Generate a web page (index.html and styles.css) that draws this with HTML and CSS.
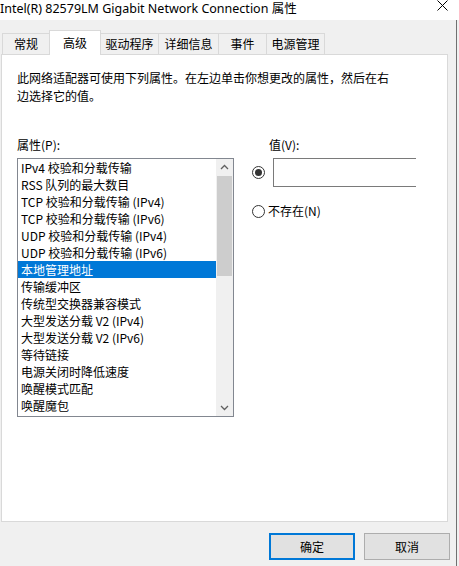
FILE: index.html
```html
<!DOCTYPE html>
<html lang="zh-CN">
<head>
<meta charset="utf-8">
<link rel="stylesheet" href="styles.css">
</head>
<body>
<div class="titlebar">
  <span class="title">Intel(R) 82579LM Gigabit Network Connection 属性</span>
  <svg class="close" width="11" height="11" viewBox="0 0 11 11"><path d="M0.5 0.5 L10.5 10.5 M10.5 0.5 L0.5 10.5" stroke="#000" stroke-width="1" fill="none"/></svg>
</div>
<div class="main">
  <div class="tabs">
    <div class="tab w47">常规</div>
    <div class="tab active w51">高级</div>
    <div class="tab w58">驱动程序</div>
    <div class="tab w60">详细信息</div>
    <div class="tab w48">事件</div>
    <div class="tab w58">电源管理</div>
  </div>
  <div class="panel">
    <p class="desc">此网络适配器可使用下列属性。在左边单击你想更改的属性，然后在右边选择它的值。</p>
    <div class="grid">
      <div class="label">属性(P):</div>
      <div class="label vlabel">值(V):</div>
      <div class="listbox">
        <ul class="items">
          <li>IPv4 校验和分载传输</li>
          <li>RSS 队列的最大数目</li>
          <li>TCP 校验和分载传输 (IPv4)</li>
          <li>TCP 校验和分载传输 (IPv6)</li>
          <li>UDP 校验和分载传输 (IPv4)</li>
          <li>UDP 校验和分载传输 (IPv6)</li>
          <li class="sel">本地管理地址</li>
          <li>传输缓冲区</li>
          <li>传统型交换器兼容模式</li>
          <li>大型发送分载 V2 (IPv4)</li>
          <li>大型发送分载 V2 (IPv6)</li>
          <li>等待链接</li>
          <li>电源关闭时降低速度</li>
          <li>唤醒模式匹配</li>
          <li>唤醒魔包</li>
        </ul>
        <div class="scrollbar">
          <svg class="arrow" width="17" height="17" viewBox="0 0 17 17"><path d="M5 10 L8.5 6.5 L12 10" stroke="#606060" stroke-width="1.3" fill="none"/></svg>
          <div class="track"><div class="thumb"></div></div>
          <svg class="arrow" width="17" height="17" viewBox="0 0 17 17"><path d="M5 7 L8.5 10.5 L12 7" stroke="#606060" stroke-width="1.3" fill="none"/></svg>
        </div>
      </div>
      <div class="values">
        <div class="vrow">
          <span class="radio checked"></span>
          <div class="input"></div>
        </div>
        <div class="vrow none">
          <span class="radio"></span>
          <span class="rtext">不存在(N)</span>
        </div>
      </div>
    </div>
  </div>
  <div class="buttons">
    <button class="btn default">确定</button>
    <button class="btn">取消</button>
  </div>
</div>
</body>
</html>
```
FILE: styles.css
```css
* { box-sizing: border-box; }
html, body { margin: 0; padding: 0; }
body {
  width: 459px;
  height: 566px;
  overflow: hidden;
  background: #f0f0f0;
  font-family: "Noto Sans CJK SC", "Noto Sans", sans-serif;
  font-size: 12px;
  color: #000;
}
.titlebar {
  height: 20px;
  background: #fff;
  display: flex;
  justify-content: space-between;
  align-items: flex-start;
}
.title {
  font-family: "Noto Sans", "Noto Sans CJK SC", sans-serif;
  font-size: 12.5px;
  line-height: 17px;
  white-space: nowrap;
}
.close { margin: 0 11px 0 0; }
.main {
  width: 457px;
  height: 546px;
  border-right: 1px solid #707070;
  padding-top: 10px;
}
.tabs {
  display: flex;
  align-items: flex-end;
  padding-left: 2px;
  height: 24px;
  position: relative;
  z-index: 1;
}
.tab {
  height: 21px;
  border: 1px solid #d9d9d9;
  border-bottom: none;
  margin-left: -1px;
  background: #f0f0f0;
  text-align: center;
  line-height: 20px;
}
.tab:first-child { margin-left: 0; }
.tab.active {
  background: #fff;
  line-height: 24px;
  margin-bottom: -1px;
  height: 25px;
}
.w47 { width: 48px; }
.w51 { width: 52px; }
.w58 { width: 59px; }
.w60 { width: 61px; }
.w48 { width: 49px; }
.panel {
  margin-left: 1px;
  width: 447px;
  height: 468px;
  background: #fff;
  border: 1px solid #d9d9d9;
  padding: 14px 15px 0 15px;
}
.desc {
  margin: 0;
  width: 378px;
  line-height: 18px;
}
.grid {
  display: grid;
  grid-template-columns: 217px 1fr;
  column-gap: 18px;
  margin-top: 31px;
}
.label { line-height: 18px; height: 22px; }
.vlabel { padding-left: 17px; }
.listbox {
  height: 259px;
  border: 1px solid #828790;
  display: flex;
}
.items {
  list-style: none;
  margin: 0;
  padding: 0;
  flex: 1;
}
.items li {
  height: 17px;
  line-height: 17px;
  padding-left: 3px;
  white-space: nowrap;
}
.items li.sel { background: #0078d7; color: #fff; }
.scrollbar {
  width: 17px;
  background: #f0f0f0;
  display: flex;
  flex-direction: column;
}
.arrow { display: block; flex: none; }
.track { flex: 1; padding: 0 1px; }
.thumb { height: 100px; background: #cdcdcd; }
.values { display: flex; flex-direction: column; }
.vrow { display: flex; align-items: center; }
.radio {
  width: 13px;
  height: 13px;
  border: 1px solid #333;
  border-radius: 50%;
  background: #fff;
  flex: none;
  position: relative;
}
.radio.checked::after {
  content: "";
  position: absolute;
  left: 2px; top: 2px;
  width: 7px; height: 7px;
  border-radius: 50%;
  background: #333;
}
.input {
  margin-left: 8px;
  width: 143px;
  height: 29px;
  border: 1px solid #7a7a7a;
  border-right: none;
}
.vrow.none { margin-top: 17px; }
.rtext { margin-left: 3px; line-height: 14px; }
.buttons {
  display: flex;
  justify-content: flex-end;
  gap: 9px;
  padding-right: 6px;
  margin-top: 11px;
}
.btn {
  width: 86px;
  height: 27px;
  background: #e1e1e1;
  border: 1px solid #adadad;
  font-family: "Noto Sans CJK SC", sans-serif;
  font-size: 12px;
  color: #000;
  padding: 0;
}
.btn.default { border: 2px solid #0078d7; }
```
